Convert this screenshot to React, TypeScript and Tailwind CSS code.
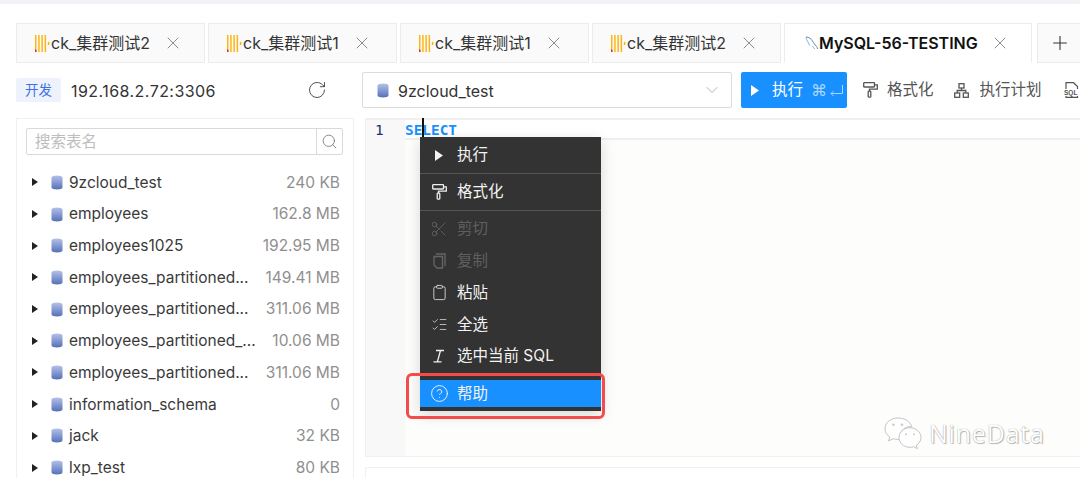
import { ChevronDown, CircleHelp, Clipboard, ListChecks, Plus, RotateCw, Scissors, Search, X } from "lucide-react";
import type { ReactNode } from "react";

function ClickHouseLogo() {
  return (
    <svg width="16" height="17" viewBox="0 0 16 17" className="shrink-0">
      <rect x="0" y="0" width="1.5" height="17" fill="#fdb515" />
      <rect x="0" y="14.5" width="1.5" height="2.5" fill="#e0302a" />
      <rect x="3.2" y="0" width="1.5" height="17" fill="#fdb515" />
      <rect x="6.4" y="0" width="1.5" height="17" fill="#fdb515" />
      <rect x="9.6" y="0" width="1.5" height="17" fill="#fdb515" />
      <rect x="12.8" y="6.8" width="1.6" height="3.2" fill="#fdb515" />
    </svg>
  );
}

function Dolphin() {
  return (
    <svg width="14" height="14" viewBox="0 0 14 14" fill="none" className="shrink-0">
      <path d="M1 1c3 .2 5 1.600 6.500 4 1 1.600 2 3.400 4 5.500.6.700 1 1.500 1.200 2.500" stroke="#5b8fb5" strokeWidth="1" />
      <path d="M1 1c.3 2.500 1.200 3.600 2 5 .6 1.200.8 2.600 1.800 3.600M7.500 9.800c.7 1.300 1.200 2.200 2.300 3.200" stroke="#7fa9c7" strokeWidth="0.9" />
    </svg>
  );
}

function Db() {
  return (
    <svg width="12" height="15" viewBox="0 0 12 15" className="shrink-0">
      <defs>
        <linearGradient id="dbg" x1="0" y1="0" x2="0" y2="1">
          <stop offset="0" stopColor="#b4c2ea" />
          <stop offset="1" stopColor="#5570b8" />
        </linearGradient>
      </defs>
      <path d="M.5 2.500C.5 1.200 3 .5 6 .5s5.500.7 5.500 2v10c0 1.300-2.500 2-5.500 2s-5.500-.7-5.500-2z" fill="url(#dbg)" />
    </svg>
  );
}

function Roller({ color }: { color: string }) {
  return (
    <svg width="15" height="16" viewBox="0 0 15 16" fill="none" stroke={color} strokeWidth="1.300" className="shrink-0">
      <rect x="0.700" y="0.700" width="10.800" height="4.300" rx="0.5" />
      <path d="M11.500 2.800h2.800v4.400H6.500v2" />
      <rect x="5.200" y="9.200" width="2.600" height="6" rx="0.8" />
    </svg>
  );
}

function Triangle({ color }: { color: string }) {
  return (
    <svg width="8" height="11" viewBox="0 0 8 11" className="shrink-0">
      <path d="M0 0 8 5.500 0 11z" fill={color} />
    </svg>
  );
}

function PlanIcon() {
  return (
    <svg width="15" height="15" viewBox="0 0 15 15" fill="none" stroke="#555" strokeWidth="1.300" className="shrink-0">
      <rect x="5" y="0.700" width="5" height="4.300" />
      <rect x="0.700" y="10" width="5" height="4.300" />
      <rect x="9.300" y="10" width="5" height="4.300" />
      <path d="M7.500 5v2.500M3.200 10V7.500h8.600V10" />
    </svg>
  );
}

function CopyIcon() {
  return (
    <svg width="13" height="16" viewBox="0 0 13 16" fill="none" stroke="#666" strokeWidth="1.300">
      <path d="M3 1h9v12" />
      <path d="M1 3.500h8.500V15H4l-3-3z" />
    </svg>
  );
}

function ReturnKey() {
  return (
    <svg width="13" height="11" viewBox="0 0 13 11" fill="none" stroke="#a9d6ff" strokeWidth="1" className="shrink-0">
      <path d="M12.500 0v8.500H1M3.500 6 1 8.500 3.500 11" />
    </svg>
  );
}

function SqlFile() {
  return (
    <svg width="15" height="16" viewBox="0 0 15 16" fill="none" className="shrink-0">
      <path d="M2 7V.7h7.500L13.500 4.500V7M2 14v1.300h11.500V14" stroke="#555" strokeWidth="1.200" />
      <text x="0" y="13" fontSize="6.500" fontWeight="700" fill="#555" fontFamily="'Liberation Sans', sans-serif">SQL</text>
    </svg>
  );
}

function Tab({ width, label, active = false }: { width: string; label: string; active?: boolean }) {
  return (
    <div
      className={`${width} h-[40px] flex items-center shrink-0 border border-[#ececec] ${
        active ? "bg-white border-b-white pl-[20px]" : "bg-[#fafafa] pl-[18px]"
      }`}
    >
      {active ? <Dolphin /> : <ClickHouseLogo />}
      <span className={`whitespace-nowrap text-[16px] ${active ? "font-semibold text-[#111]" : "text-[#333]"}`}>{label}</span>
      <span className={`flex ${active ? "pl-[12px]" : "pl-[13px]"}`}>
        <X size={20} strokeWidth={1} color="#777" />
      </span>
    </div>
  );
}

const rows = [
  ["9zcloud_test", "240 KB"],
  ["employees", "162.8 MB"],
  ["employees1025", "192.95 MB"],
  ["employees_partitioned...", "149.41 MB"],
  ["employees_partitioned...", "311.06 MB"],
  ["employees_partitioned_...", "10.06 MB"],
  ["employees_partitioned...", "311.06 MB"],
  ["information_schema", "0"],
  ["jack", "32 KB"],
  ["lxp_test", "80 KB"],
];

function MenuItem({ icon, label, disabled = false, h = "h-[31.8px]" }: { icon: ReactNode; label: string; disabled?: boolean; h?: string }) {
  return (
    <div className={`${h} flex items-center`}>
      <span className="w-[37px] flex justify-center pl-[1px]">{icon}</span>
      <span className={`text-[15.500px] whitespace-nowrap ${disabled ? "text-[#5f5f5f]" : "text-[#f2f2f2]"}`}>{label}</span>
    </div>
  );
}

function ItalicIcon() {
  return (
    <svg width="14" height="14" viewBox="0 0 14 14" fill="none" stroke="#eee" strokeWidth="1.300">
      <path d="M4 1.500h8M8.500 1.500 5.500 12.500M1.500 12.800h8" />
    </svg>
  );
}

function WeChat() {
  return (
    <svg width="38" height="34" viewBox="0 0 38 34" fill="white" stroke="#c4c4c4" strokeWidth="1">
      <path d="M14 1C6.500 1 1 5.800 1 11.800c0 3.500 1.900 6.300 4.800 8.300L4.600 24l4.500-2.300c1.600.4 3.200.7 4.900.7.600 0 1.200 0 1.800-.1C15 14 21 9 27.800 9.600 26.300 4.600 20.700 1 14 1z" />
      <path d="M37 20.500c0-5.400-5.200-9.800-11-9.800-6.200 0-11 4.400-11 9.800s4.800 9.800 11 9.800c1.300 0 2.500-.2 3.700-.6l3.500 2-1-3.300c2.900-1.900 4.800-4.700 4.800-7.900z" />
      <circle cx="9.500" cy="7.800" r="1.300" fill="#ccc" stroke="none" />
      <circle cx="18" cy="7.800" r="1.300" fill="#ccc" stroke="none" />
      <circle cx="22" cy="17.300" r="1" fill="#ccc" stroke="none" />
      <circle cx="30" cy="17.300" r="1" fill="#ccc" stroke="none" />
    </svg>
  );
}

export default function App() {
  return (
    <div
      className="relative w-[1080px] h-[478px] overflow-hidden bg-white text-[#333]"
      style={{ fontFamily: "Inter, 'Noto Sans CJK SC', sans-serif" }}
    >
      <div className="h-[4px] bg-[#f0f2f5]" />
      {/* tabs */}
      <div className="mt-[19px] pl-[16px] flex gap-[3px]">
        <Tab width="w-[189px]" label="ck_集群测试2" />
        <Tab width="w-[189px]" label="ck_集群测试1" />
        <Tab width="w-[189px]" label="ck_集群测试1" />
        <Tab width="w-[189px]" label="ck_集群测试2" />
        <Tab width="w-[248px]" label="MySQL-56-TESTING" active />
        <div className="ml-[2px] w-[60px] h-[40px] border border-[#ececec] bg-[#fafafa] flex items-center pl-[11px] shrink-0">
          <Plus size={22} strokeWidth={1.200} color="#333" />
        </div>
      </div>
      {/* toolbar */}
      <div className="mt-[9px] h-[36px] flex items-center pl-[16px]">
        <div className="w-[346px] flex items-center shrink-0">
          <span className="w-[45px] h-[24px] bg-[#edf2fd] text-[#3f71e0] text-[13.500px] flex items-center justify-center rounded-[2px]">开发</span>
          <span className="ml-[10px] text-[16px] tracking-[0.45px] text-[#333] pt-px">192.168.2.72:3306</span>
          <RotateCw size={20} strokeWidth={1.100} color="#444" className="ml-[91px]" />
        </div>
        <div className="w-[370px] h-[36px] border border-[#dcdcdc] rounded-[2px] flex items-center pl-[14px] pr-[9px] shrink-0">
          <Db />
          <span className="ml-[9px] text-[16px] text-[#333] pt-px">9zcloud_test</span>
          <ChevronDown size={20} strokeWidth={0.900} color="#999" className="ml-auto" />
        </div>
        <div className="ml-[9px] w-[106px] h-[36px] bg-[#1890ff] rounded-[2px] flex items-center pl-[10px] shrink-0 text-white">
          <Triangle color="white" />
          <span className="ml-[13px] text-[15.500px]">执行</span>
          <span className="ml-[8px] text-[16px] text-[#a9d6ff]">⌘</span>
          <span className="ml-[3px]">
            <ReturnKey />
          </span>
        </div>
        <div className="ml-[16px] flex items-center shrink-0 text-[#555]">
          <Roller color="#555" />
          <span className="ml-[9px] text-[15.500px]">格式化</span>
          <span className="ml-[20px]">
            <PlanIcon />
          </span>
          <span className="ml-[11px] text-[15.500px]">执行计划</span>
          <span className="ml-[22px]">
            <SqlFile />
          </span>
        </div>
      </div>
      {/* body */}
      <div className="mt-[10px] pl-[16px] flex gap-[11px]">
        <div className="w-[338px] h-[370px] shrink-0 border border-[#f0f0f0] pt-[9px] px-[9px]">
          <div className="h-[27px] w-[317px] border border-[#d9d9d9] rounded-[2px] flex">
            <div className="flex-1 pl-[8px] text-[15.500px] text-[#bdbdbd] leading-[25px]">搜索表名</div>
            <div className="w-[26px] border-l border-[#d9d9d9] flex items-center justify-center">
              <Search size={17} strokeWidth={1.200} color="#777" />
            </div>
          </div>
          <div className="mt-[11.500px]">
            {rows.map(([name, size], i) => (
              <div key={i} className="h-[31.7px] flex items-center">
                <svg width="6" height="8" viewBox="0 0 6 8" className="ml-[6px] shrink-0">
                  <path d="M0 0 6 4 0 8z" fill="#222" />
                </svg>
                <span className="ml-[13px]">
                  <Db />
                </span>
                <span className="ml-[6px] text-[15.500px] text-[#3a3a3a] whitespace-nowrap">{name}</span>
                <span className="ml-auto mr-[4px] text-[15.500px] text-[#8f8f8f] whitespace-nowrap">{size}</span>
              </div>
            ))}
          </div>
        </div>
        <div className="w-[720px] shrink-0">
          <div className="h-[339px] border border-[#f0f0f0] border-t-[2px] bg-[#fdfdfc] flex">
            <div className="w-[39px] bg-[#f8f8f8] pl-[9px] text-[14.400px] leading-[20px] text-[#1d2f7a] font-['DejaVu_Sans_Mono',monospace]">1</div>
            <div className="flex-1 h-[20px] bg-white border-b-2 border-[#efefef] text-[14.400px] leading-[20px] font-bold text-[#1890ff] font-['DejaVu_Sans_Mono',monospace]">
              SELECT
            </div>
          </div>
          <div className="mt-[10px] h-[40px] border border-[#f0f0f0]" />
        </div>
      </div>

      {/* caret */}
      <div className="absolute left-[422px] top-[118px] w-[2px] h-[20px] bg-[#111]" />
      {/* context menu */}
      <div className="absolute left-[420px] top-[137px] w-[181px] h-[274px] bg-[#333] shadow-[0_4px_14px_rgba(0,0,0,0.15)]">
        <MenuItem h="h-[36px]" icon={<Triangle color="#f2f2f2" />} label="执行" />
        <div className="h-px bg-[#555]" />
        <MenuItem h="h-[36px]" icon={<Roller color="#eee" />} label="格式化" />
        <div className="h-px bg-[#555]" />
        <div className="pt-[2px]">
          <MenuItem icon={<Scissors size={18} strokeWidth={1.100} color="#666" />} label="剪切" disabled />
          <MenuItem icon={<CopyIcon />} label="复制" disabled />
          <MenuItem icon={<Clipboard size={17} strokeWidth={1.100} color="#eee" />} label="粘贴" />
          <MenuItem icon={<ListChecks size={17} strokeWidth={1.100} color="#ddd" />} label="全选" />
          <MenuItem icon={<ItalicIcon />} label="选中当前 SQL" />
        </div>
        <div className="mt-[8px] h-[27px] bg-[#1890ff]">
          <MenuItem h="h-[27px]" icon={<CircleHelp size={19} strokeWidth={1.100} color="#fff" />} label="帮助" />
        </div>
      </div>
      {/* red highlight */}
      <div className="absolute left-[406px] top-[373px] w-[199px] h-[46px] border-[3px] border-[#f44c4c] rounded-[6px]" />
      {/* watermark */}
      <div className="absolute left-[884px] top-[415px] flex items-center gap-[7px]">
        <WeChat />
        <span className="text-[25px] tracking-[0.8px] text-white [text-shadow:0_0_1px_#888,1px_1px_1px_#bbb]" style={{ fontFamily: "'Open Sans', sans-serif" }}>
          NineData
        </span>
      </div>
    </div>
  );
}
